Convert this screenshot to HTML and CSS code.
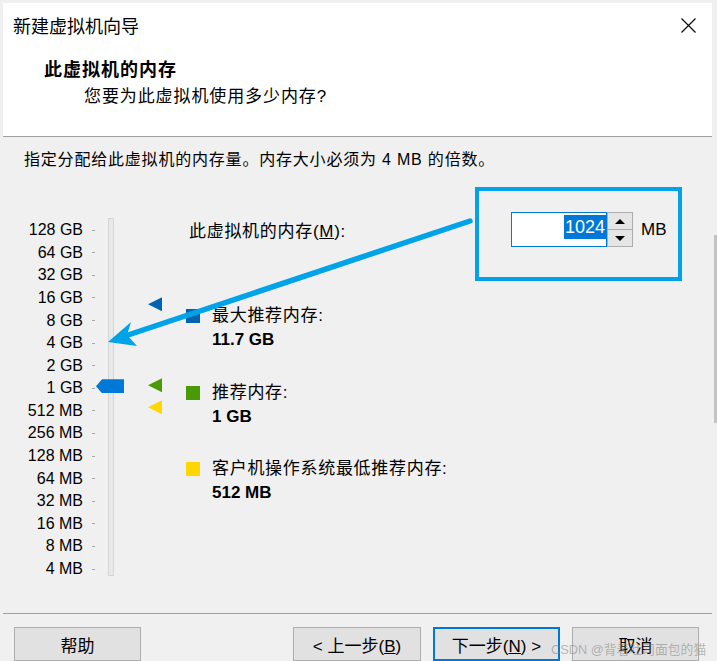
FILE: index.html
```html
<!DOCTYPE html>
<html lang="zh-CN">
<head>
  <meta charset="UTF-8">
  <title>新建虚拟机向导</title>
  <link rel="stylesheet" href="styles.css">
</head>
<body>
  <div class="screen">
    <div class="dialog">
      <div class="header">
        <div class="titlebar">
          <span class="title">新建虚拟机向导</span>
          <svg class="close" width="15" height="15" viewBox="0 0 15 15">
            <path d="M0.5 0.5 L14.5 14.5 M14.5 0.5 L0.5 14.5" stroke="#000" stroke-width="1.1" fill="none"/>
          </svg>
        </div>
        <div class="heading">此虚拟机的内存</div>
        <div class="subheading">您要为此虚拟机使用多少内存?</div>
      </div>

      <div class="body">
        <p class="hint">指定分配给此虚拟机的内存量。内存大小必须为 4 MB 的倍数。</p>

        <div class="memory">
          <div class="slider">
            <ul class="scale">
              <li><span>128 GB</span><i></i></li>
              <li><span>64 GB</span><i></i></li>
              <li><span>32 GB</span><i></i></li>
              <li><span>16 GB</span><i></i></li>
              <li><span>8 GB</span><i></i></li>
              <li><span>4 GB</span><i></i></li>
              <li><span>2 GB</span><i></i></li>
              <li><span>1 GB</span><i></i></li>
              <li><span>512 MB</span><i></i></li>
              <li><span>256 MB</span><i></i></li>
              <li><span>128 MB</span><i></i></li>
              <li><span>64 MB</span><i></i></li>
              <li><span>32 MB</span><i></i></li>
              <li><span>16 MB</span><i></i></li>
              <li><span>8 MB</span><i></i></li>
              <li><span>4 MB</span><i></i></li>
            </ul>
            <div class="track"></div>
            <div class="thumb" style="top: 167px;"></div>
            <div class="marker max" style="top: 85px;"></div>
            <div class="marker rec" style="top: 166px;"></div>
            <div class="marker min" style="top: 188px;"></div>
          </div>

          <div class="settings">
            <div class="size-row">
              <label class="size-label">此虚拟机的内存(<u>M</u>):</label>
              <div class="spin">
                <div class="spin-input"><span class="sel">1024</span></div>
                <div class="spin-buttons">
                  <div class="spin-btn"><b class="up"></b></div>
                  <div class="spin-btn"><b class="down"></b></div>
                </div>
              </div>
              <span class="unit">MB</span>
            </div>

            <div class="legend">
              <div class="legend-item">
                <span class="swatch max"></span>
                <div>
                  <div class="legend-label">最大推荐内存:</div>
                  <div class="legend-value">11.7 GB</div>
                </div>
              </div>
              <div class="legend-item">
                <span class="swatch rec"></span>
                <div>
                  <div class="legend-label">推荐内存:</div>
                  <div class="legend-value">1 GB</div>
                </div>
              </div>
              <div class="legend-item">
                <span class="swatch min"></span>
                <div>
                  <div class="legend-label">客户机操作系统最低推荐内存:</div>
                  <div class="legend-value">512 MB</div>
                </div>
              </div>
            </div>
          </div>
        </div>
      </div>

      <div class="footer">
        <button class="btn help">帮助</button>
        <button class="btn back">&lt; 上一步(<u>B</u>)</button>
        <button class="btn primary">下一步(<u>N</u>) &gt;</button>
        <button class="btn">取消</button>
      </div>
    </div>
    <div class="edge"><div class="edge-thumb"></div></div>
  </div>

  <!-- 标注 -->
  <svg class="annotation" width="717" height="661" viewBox="0 0 717 661">
    <rect x="477" y="189" width="203" height="90" fill="none" stroke="#00a2e8" stroke-width="4"/>
    <line x1="470" y1="221" x2="128" y2="335" stroke="#00a2e8" stroke-width="5.5" stroke-linecap="round"/>
    <polygon points="108,342 131,322 127,335 137,346" fill="#00a2e8"/>
  </svg>
  <div class="watermark">CSDN @背着吐司面包的猫</div>
</body>
</html>
```

FILE: styles.css
```css
* {
  box-sizing: border-box;
}
body {
  margin: 0;
  font-family: "Liberation Sans", "Noto Sans CJK SC", sans-serif;
  background-color: #f0f0f0;
  color: #000;
  overflow: hidden;
}
.screen {
  display: flex;
  width: 717px;
  height: 661px;
  padding: 3px 0 0 3px;
}
.dialog {
  width: 709px;
  height: 658px;
  background-color: #f0f0f0;
  display: flex;
  flex-direction: column;
}
.header {
  height: 135px;
  background-color: #fff;
  border-bottom: 1px solid #a0a0a0;
}
.titlebar {
  height: 44px;
  display: flex;
  align-items: center;
  justify-content: space-between;
  padding: 0 16px 0 10px;
  font-size: 18px;
}
.heading {
  margin-top: 11px;
  line-height: 24px;
  padding-left: 41px;
  font-size: 18px;
  font-weight: bold;
  letter-spacing: 1px;
}
.subheading {
  margin-top: 3px;
  line-height: 24px;
  padding-left: 81px;
  font-size: 17px;
  letter-spacing: 0.9px;
}
.body {
  height: 478px;
  padding: 11px 0 0 21px;
}
.hint {
  margin: 0;
  line-height: 24px;
  font-size: 16px;
  letter-spacing: 0.8px;
}
.memory {
  display: flex;
  margin-top: 40px;
}
.slider {
  position: relative;
  display: flex;
  width: 162px;
  height: 370px;
}
.scale {
  list-style: none;
  margin: 0;
  padding: 6.5px 0 0;
  width: 71px;
}
.scale li {
  display: flex;
  align-items: center;
  height: 22.6px;
  font-size: 16px;
}
.scale span {
  width: 59px;
  text-align: right;
}
.scale i {
  width: 3px;
  height: 1px;
  margin-left: 9px;
  background-color: #a8a8a8;
}
.track {
  margin: 6px 0 0 13px;
  width: 6px;
  height: 358px;
  background-color: #e7eae8;
  border: 1px solid #d4d6d4;
}
.thumb {
  position: absolute;
  left: 72px;
  width: 28px;
  height: 14px;
  background-color: #0078d7;
  clip-path: polygon(0 50%, 6px 0, 100% 0, 100% 100%, 6px 100%);
}
.marker {
  position: absolute;
  left: 124px;
  width: 14px;
  height: 14px;
  clip-path: polygon(0 50%, 100% 0, 100% 100%);
}
.max {
  background-color: #0063b1;
}
.rec {
  background-color: #4a9a06;
}
.min {
  background-color: #ffd700;
}
.settings {
  flex: 1;
}
.size-row {
  display: flex;
  align-items: center;
  height: 35px;
}
.size-label {
  width: 325px;
  padding-left: 3px;
  font-size: 17px;
  letter-spacing: 0.7px;
}
.spin {
  display: flex;
}
.spin-input {
  width: 96px;
  height: 35px;
  border: 1px solid #0078d7;
  background-color: #fff;
  display: flex;
  justify-content: flex-end;
  align-items: flex-start;
  padding-top: 2px;
}
.sel {
  background-color: #0078d7;
  color: #fff;
  height: 24px;
  line-height: 24px;
  font-size: 18px;
  padding: 0 1px;
}
.spin-buttons {
  width: 26px;
  height: 35px;
  display: flex;
  flex-direction: column;
}
.spin-btn {
  flex: 1;
  border: 1px solid #adadad;
  background-color: #e5e5e5;
  display: flex;
  align-items: center;
  justify-content: center;
}
.spin-btn + .spin-btn {
  border-top: none;
}
.spin-btn b {
  width: 0;
  height: 0;
  border-left: 5px solid transparent;
  border-right: 5px solid transparent;
}
.spin-btn .up {
  border-bottom: 5px solid #000;
}
.spin-btn .down {
  border-top: 5px solid #000;
}
.unit {
  margin-left: 8px;
  font-size: 17px;
}
.legend {
  margin-top: 57px;
  display: flex;
  flex-direction: column;
  gap: 28.5px;
}
.legend-item {
  display: flex;
  height: 48px;
}
.swatch {
  width: 14px;
  height: 14px;
  margin: 5px 12px 0 0;
}
.legend-label {
  line-height: 24px;
  font-size: 17px;
  letter-spacing: 0.7px;
}
.legend-value {
  line-height: 24px;
  font-size: 17px;
  font-weight: bold;
}
.footer {
  flex: 1;
  border-top: 1px solid #a0a0a0;
  padding: 13px 13px 0 11px;
  display: flex;
  gap: 12px;
}
.btn {
  width: 127px;
  height: 34px;
  padding: 0;
  border: 1px solid #adadad;
  background-color: #e1e1e1;
  font-family: "Liberation Sans", "Noto Sans CJK SC", sans-serif;
  font-size: 17px;
  color: #000;
}
.btn.help {
  margin-right: auto;
}
.btn.back {
  width: 128px;
}
.btn.primary {
  border: 2px solid #0078d7;
}
.edge {
  width: 5px;
  display: flex;
  justify-content: flex-end;
}
.edge-thumb {
  margin-top: 232px;
  width: 3px;
  height: 188px;
  background-color: #c4c4c4;
}
.annotation {
  position: absolute;
  top: 0;
  left: 0;
  pointer-events: none;
}
.watermark {
  position: absolute;
  left: 551px;
  top: 639px;
  font-size: 12.8px;
  color: rgba(130, 130, 130, 0.55);
  white-space: nowrap;
}
```
